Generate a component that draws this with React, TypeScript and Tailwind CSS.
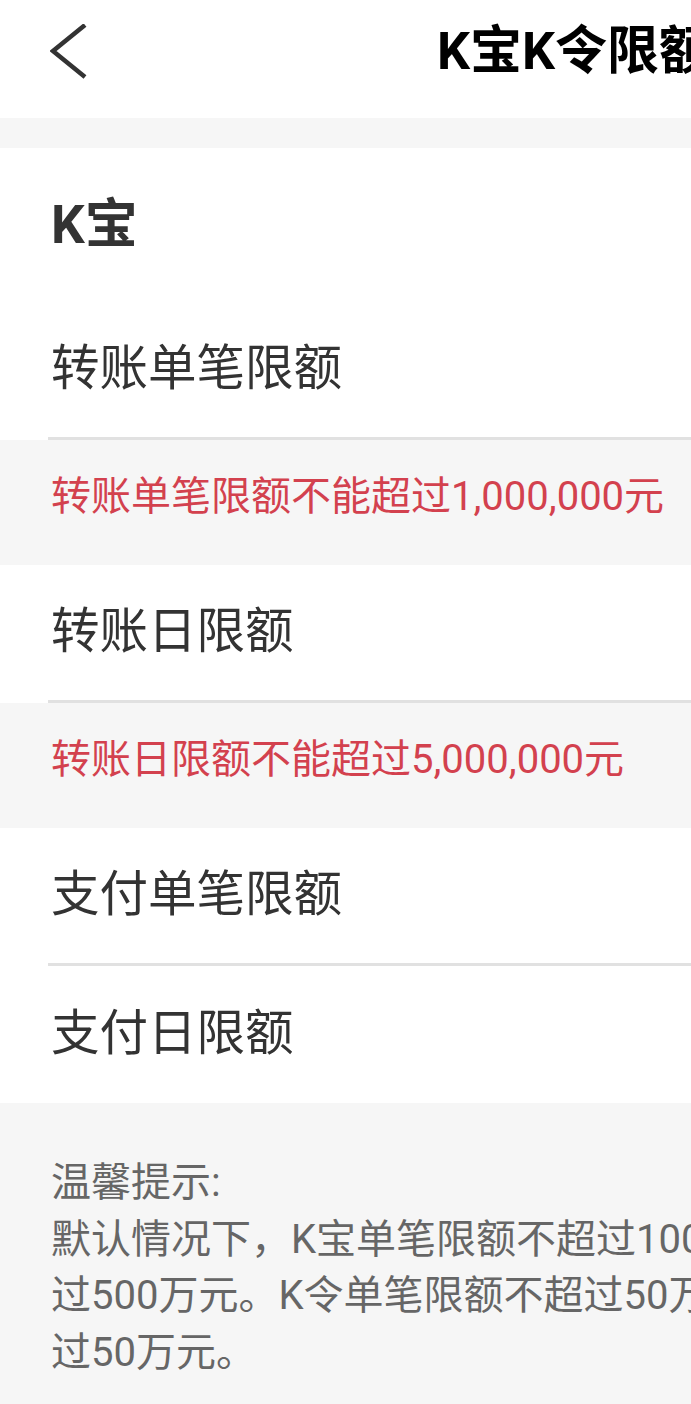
import React from "react";

const font = { fontFamily: 'Roboto, "Noto Sans CJK SC", "Noto Sans", sans-serif' };

function Divider() {
  return (
    <div className="pl-[48px] bg-white">
      <div className="h-[3px] bg-[#e1e1e1]" />
    </div>
  );
}

function Row({ label }: { label: string }) {
  return (
    <div className="h-[135px] bg-white flex items-center pl-[51px] text-[48.5px] text-[#333333] leading-none whitespace-nowrap">
      {label}
    </div>
  );
}

function Warn({ text }: { text: string }) {
  return (
    <div className="h-[125px] bg-[#f6f6f6] flex items-center pl-[51px] pb-[11px] text-[40px] text-[#d3414e] leading-none whitespace-nowrap">
      {text}
    </div>
  );
}

export default function App() {
  return (
    <div className="w-full overflow-hidden bg-[#f6f6f6]" style={font}>
      <div className="w-[1148px] min-h-[1404px] flex flex-col">
        <header className="h-[118px] bg-white grid grid-cols-[1fr_auto_1fr] items-center pb-[14px]">
          <div className="pl-[50px] flex items-center">
            <svg width="38" height="56" viewBox="0 0 38 56" fill="none">
              <polyline points="35,1 3,27 35,53" stroke="#333333" strokeWidth="4.5" strokeLinejoin="miter" />
            </svg>
          </div>
          <h1 className="text-[52px] font-bold text-black leading-none whitespace-nowrap">K宝K令限额</h1>
          <div />
        </header>
        <div className="h-[30px] bg-[#f6f6f6]" />
        <section className="bg-white">
          <div className="h-[154px] flex items-center pl-[51px] text-[53px] font-bold text-[#333333] leading-none">
            K宝
          </div>
          <Row label="转账单笔限额" />
          <Divider />
        </section>
        <Warn text="转账单笔限额不能超过1,000,000元" />
        <Row label="转账日限额" />
        <Divider />
        <Warn text="转账日限额不能超过5,000,000元" />
        <Row label="支付单笔限额" />
        <Divider />
        <div className="h-[137px] bg-white flex items-center pl-[51px] text-[48.5px] text-[#333333] leading-none whitespace-nowrap">
          支付日限额
        </div>
        <footer className="bg-[#f6f6f6] pt-[52px] pl-[51px] text-[40px] leading-[56.5px] text-[#666666] whitespace-nowrap">
          <p>温馨提示:</p>
          <p>默认情况下，K宝单笔限额不超过100万元，日累计限额不超</p>
          <p>过500万元。K令单笔限额不超过50万元，日累计限额不超</p>
          <p>过50万元。</p>
        </footer>
      </div>
    </div>
  );
}
